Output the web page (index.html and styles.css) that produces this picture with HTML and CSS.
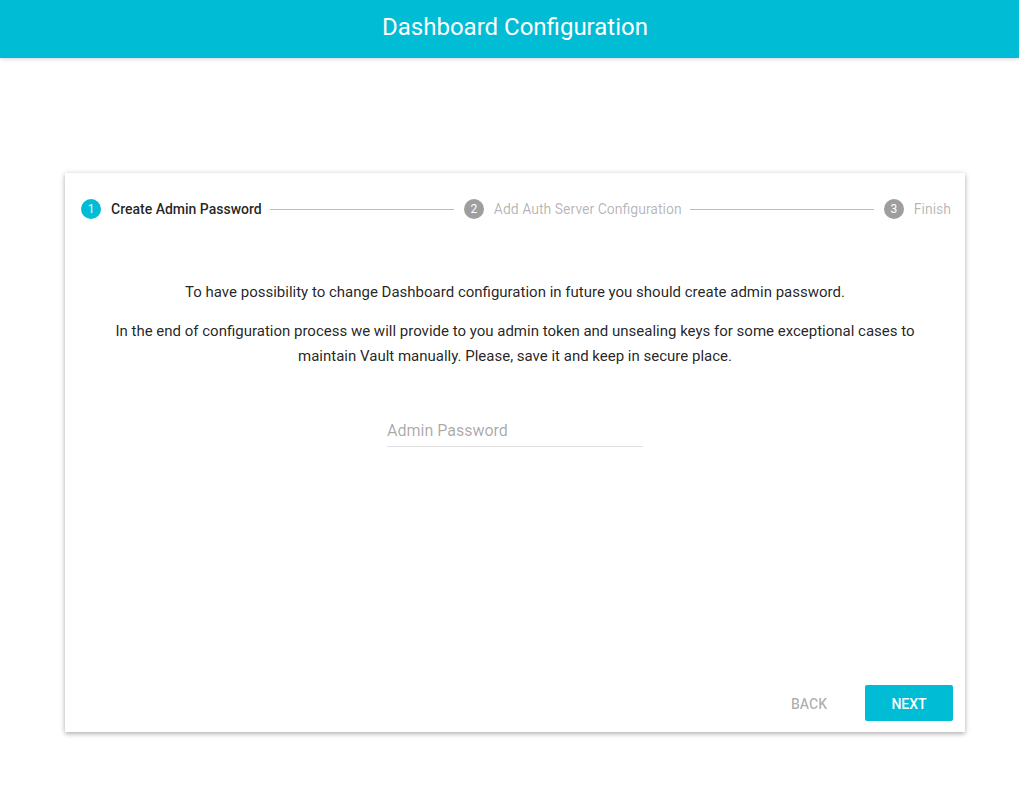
FILE: index.html
```html
<!DOCTYPE html>
<html>
<head>
<meta charset="utf-8">
<link rel="stylesheet" href="styles.css">
</head>
<body>
<div class="app">
  <header class="topbar"><h1 class="title">Dashboard Configuration</h1></header>
  <main class="main">
    <section class="card">
      <div class="stepper">
        <div class="step active"><span class="num">1</span><span class="label">Create Admin Password</span></div>
        <div class="connector"></div>
        <div class="step"><span class="num">2</span><span class="label">Add Auth Server Configuration</span></div>
        <div class="connector"></div>
        <div class="step"><span class="num">3</span><span class="label">Finish</span></div>
      </div>
      <div class="content">
        <p class="text">To have possibility to change Dashboard configuration in future you should create admin password.</p>
        <p class="text">In the end of configuration process we will provide to you admin token and unsealing keys for some exceptional cases to maintain Vault manually. Please, save it and keep in secure place.</p>
        <div class="field"><input class="input" type="password" placeholder="Admin Password"></div>
      </div>
      <div class="actions">
        <button class="btn back">BACK</button>
        <button class="btn next">NEXT</button>
      </div>
    </section>
  </main>
</div>
</body>
</html>
```
FILE: styles.css
```css
html, body { margin: 0; padding: 0; background: #fff; }
body { font-family: Roboto, "Noto Sans", sans-serif; color: rgba(0,0,0,0.87); }
.app { padding-left: 11px; }
.topbar {
  margin-left: -11px;
  padding-left: 11px;
  height: 58px;
  background: #00bcd4;
  display: flex;
  align-items: center;
  justify-content: center;
  box-shadow: 0 1px 4px rgba(0,0,0,0.18);
}
.title { margin: 0; font-size: 24px; font-weight: 400; color: #fff; line-height: 1; padding-bottom: 4px; }
.main { display: flex; justify-content: center; padding: 115px 0 40px; }
.card {
  width: 900px;
  height: 559px;
  background: #fff;
  box-shadow: 0 1px 6px rgba(0,0,0,0.18), 0 2px 4px rgba(0,0,0,0.18);
  display: flex;
  flex-direction: column;
}
.stepper { height: 72px; display: flex; align-items: center; padding: 0 14px 0 16px; }
.step { display: flex; align-items: center; font-size: 14px; color: rgba(0,0,0,0.3); }
.num {
  width: 20px; height: 20px; border-radius: 50%;
  background: #9e9e9e; color: #fff;
  font-size: 12px; display: flex; align-items: center; justify-content: center;
  margin-right: 10px;
}
.step.active .num { background: #00bcd4; }
.step.active .label { color: rgba(0,0,0,0.87); font-weight: 500; }
.connector { flex: 1; height: 1px; background: #bdbdbd; margin: 0 10px 0 8px; }
.content { flex: 1; padding: 35px 46px 0; display: flex; flex-direction: column; align-items: center; }
.text { margin: 0 0 14px; font-size: 15px; line-height: 25px; text-align: center; }
.field { margin-top: 31px; width: 256px; }
.input {
  width: 100%; box-sizing: border-box;
  border: 0; border-bottom: 1px solid #e0e0e0; outline: none;
  font-family: inherit; font-size: 16px; padding: 7px 0 6px; line-height: 19px;
  background: transparent;
}
.input::placeholder { color: rgba(0,0,0,0.35); }
.actions { display: flex; justify-content: flex-end; gap: 12px; padding: 0 12px 11px; }
.btn {
  width: 88px; height: 36px; border: 0; border-radius: 2px;
  font-family: inherit; font-size: 14px; font-weight: 500; background: transparent;
  padding: 2px 0 0;
}
.back { color: rgba(0,0,0,0.32); }
.next { background: #00bcd4; color: #fff; }
```
